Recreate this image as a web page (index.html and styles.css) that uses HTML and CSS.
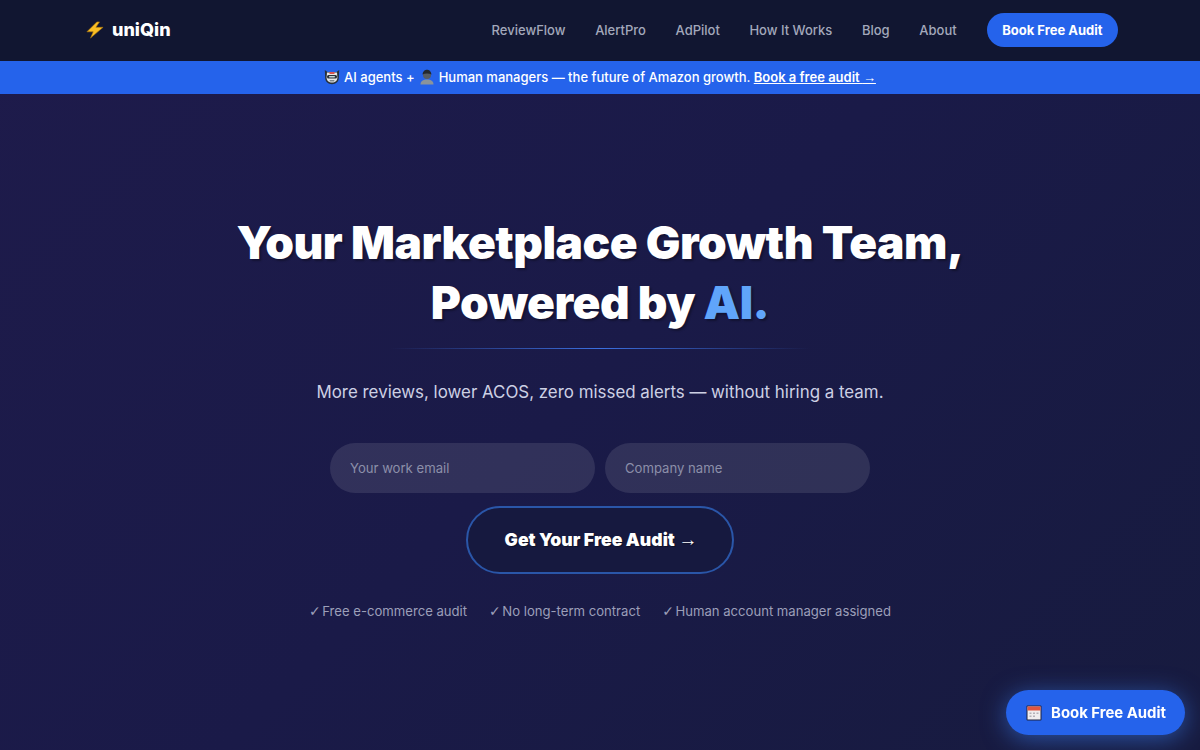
FILE: index.html
```html
<!DOCTYPE html>
<html lang="en">
<head>
  <meta charset="UTF-8">
  <title>uniQin</title>
  <link rel="stylesheet" href="styles.css">
</head>
<body>
  <nav class="nav">
    <a class="logo" href="#">
      <svg class="logo-bolt" width="18" height="18" viewBox="0 0 20 20"><path d="M12 1 1 12h7L5 19 19 7h-8l4-6z" fill="#fbbf24" stroke="#a8720f" stroke-width=".7" stroke-linejoin="round"/></svg>
      <span>uniQin</span>
    </a>
    <div class="nav-links">
      <a href="#">ReviewFlow</a>
      <a href="#">AlertPro</a>
      <a href="#">AdPilot</a>
      <a href="#">How It Works</a>
      <a href="#">Blog</a>
      <a href="#">About</a>
      <a class="nav-cta" href="#">Book Free Audit</a>
    </div>
  </nav>

  <div class="banner">
    <svg class="emoji" width="16" height="16" viewBox="0 0 16 16"><path d="M.8 1 3.500 3h9l2.700-2-.4 8c-.2 4-3.200 6.200-6.800 6.200S1.400 13 1.200 9z" fill="#27303a"/><path d="M3 3.500h10l.4 5c.1 3-2.300 5-5.400 5s-5.500-2-5.400-5z" fill="#e6e6e8"/><rect x="5.500" y="3" width="5" height="2" fill="#d9534f"/><rect x="3" y="6" width="10" height="3.500" rx="1.500" fill="#2b3238"/><rect x="5" y="7" width="6" height="1.500" rx=".7" fill="#c6d4da"/><rect x="5.500" y="11" width="5" height="1.500" rx=".7" fill="#7d868c"/></svg>
    <span>AI agents +</span>
    <svg class="emoji" width="16" height="16" viewBox="0 0 16 16"><path d="M1.500 15.500c0-3.500 2.500-5 6.500-5s6.500 1.500 6.500 5z" fill="#8a949b"/><circle cx="8" cy="6" r="4" fill="#565c62"/><path d="M3.500 5.500C4 2 6 .8 8 .8s4 1.200 4.500 4.700C10 4 6 4 3.500 5.500z" fill="#23282e"/></svg>
    <span>Human managers — the future of Amazon growth. <a href="#">Book a free audit <span class="arrow">→</span></a></span>
  </div>

  <main class="hero">
    <h1>Your Marketplace Growth Team,<br>Powered by <span class="accent">AI.</span></h1>
    <div class="divider"></div>
    <p class="subtitle">More reviews, lower ACOS, zero missed alerts — without hiring a team.</p>
    <form class="audit-form">
      <div class="fields">
        <input type="email" placeholder="Your work email">
        <input type="text" placeholder="Company name">
      </div>
      <button type="button">Get Your Free Audit <span class="arrow">→</span></button>
    </form>
    <div class="checks">
      <div class="check"><span class="tick">✓</span> <span>Free e-commerce audit</span></div>
      <div class="check"><span class="tick">✓</span> <span>No long-term contract</span></div>
      <div class="check"><span class="tick">✓</span> <span>Human account manager assigned</span></div>
    </div>
  </main>

  <a class="float-cta" href="#">
    <svg width="16" height="16" viewBox="0 0 16 16"><rect x=".5" y=".5" width="15" height="15" rx="1" fill="#1f2340"/><rect x="1.500" y="1.500" width="13" height="13" fill="#f0ecee"/><rect x="1.500" y="1.500" width="13" height="4" fill="#e0553f"/><path d="M3.500 7.500h2v1.500h-2zM7 7.500h2v1.500H7zM10.500 7.500h2v1.500h-2zM3.500 10.500h2V12h-2zM7 10.500h2V12H7z" fill="#b4b0b8"/></svg>
    <span>Book Free Audit</span>
  </a>
</body>
</html>
```

FILE: styles.css
```css
* {
  box-sizing: border-box;
}
html, body {
  height: 100%;
}
body {
  margin: 0;
  height: 750px;
  overflow: hidden;
  display: flex;
  flex-direction: column;
  background: linear-gradient(135deg, #1e1b4b 0%, #1a1a48 50%, #171b3f 100%);
  color: #fff;
  font-family: Inter, "Liberation Sans", sans-serif;
}
a {
  color: inherit;
  text-decoration: none;
}
.arrow {
  font-family: "Liberation Sans", sans-serif;
  font-weight: 400;
}

.nav {
  height: 61px;
  flex-shrink: 0;
  display: flex;
  align-items: center;
  justify-content: space-between;
  padding: 0 82px 2px 86px;
  background: #111631;
}
.logo {
  display: flex;
  align-items: center;
  gap: 8px;
  font-size: 18px;
  font-weight: 800;
}
.nav-links {
  display: flex;
  align-items: center;
  gap: 29.600px;
  font-size: 13px;
  font-weight: 500;
  color: #a3a8bb;
}
.nav-cta {
  margin-left: 0.400px;
  padding: 9px 15.500px;
  border-radius: 999px;
  background: #2563eb;
  color: #fff;
  font-weight: 700;
}

.banner {
  height: 33px;
  flex-shrink: 0;
  display: flex;
  align-items: center;
  justify-content: center;
  gap: 4px;
  padding-bottom: 1px;
  background: #2563eb;
  font-size: 13px;
  font-weight: 500;
}
.banner a {
  font-weight: 600;
  text-decoration: underline;
}

.hero {
  flex: 1;
  display: flex;
  flex-direction: column;
  align-items: center;
  padding-top: 118px;
}
h1 {
  margin: 0;
  font-size: 46px;
  font-weight: 900;
  line-height: 60px;
  text-align: center;
  letter-spacing: -0.5px;
  text-shadow: 2px 2px 2px rgba(0, 0, 0, 0.3);
}
.accent {
  color: #60a5fa;
}
.divider {
  width: 420px;
  height: 1px;
  margin-top: 16px;
  background: linear-gradient(to right, transparent, #3b6fe0, transparent);
}
.subtitle {
  margin: 31px 0 0;
  font-size: 16.9px;
  line-height: 24px;
  color: #cdd0e4;
}

.audit-form {
  margin-top: 39px;
  display: flex;
  flex-direction: column;
  align-items: center;
  gap: 13px;
}
.fields {
  display: flex;
  gap: 10px;
}
.fields input {
  width: 265px;
  height: 50px;
  padding: 0 20px;
  border: none;
  border-radius: 25px;
  background: rgba(255, 255, 255, 0.1);
  color: #fff;
  font: 400 13.120px Inter, sans-serif;
}
.fields input::placeholder {
  color: #8c8fa9;
}
.audit-form button {
  width: 268px;
  height: 68px;
  padding: 0 0 0 2px;
  border: 2px solid #2a56a8;
  border-radius: 34px;
  background: #16193f;
  color: #fff;
  font: 900 17.600px Inter, sans-serif;
  text-shadow: 1px 1px 1px rgba(0, 0, 0, 0.4);
}
.audit-form .arrow {
  font-size: 19px;
}

.checks {
  margin-top: 29px;
  display: flex;
  gap: 22px;
  font-size: 13.120px;
  color: #9c9fb9;
}
.check {
  display: flex;
  align-items: center;
  gap: 1.500px;
}
.tick {
  font-family: "DejaVu Sans", sans-serif;
  font-size: 14px;
  line-height: 1;
}

.float-cta {
  position: fixed;
  right: 15px;
  bottom: 15px;
  display: flex;
  align-items: center;
  gap: 9px;
  height: 45px;
  padding: 0 19px 0 20px;
  border-radius: 23px;
  background: #2563eb;
  font-size: 14.900px;
  font-weight: 700;
  box-shadow: 0 4px 24px rgba(59, 130, 246, 0.55);
}
```
